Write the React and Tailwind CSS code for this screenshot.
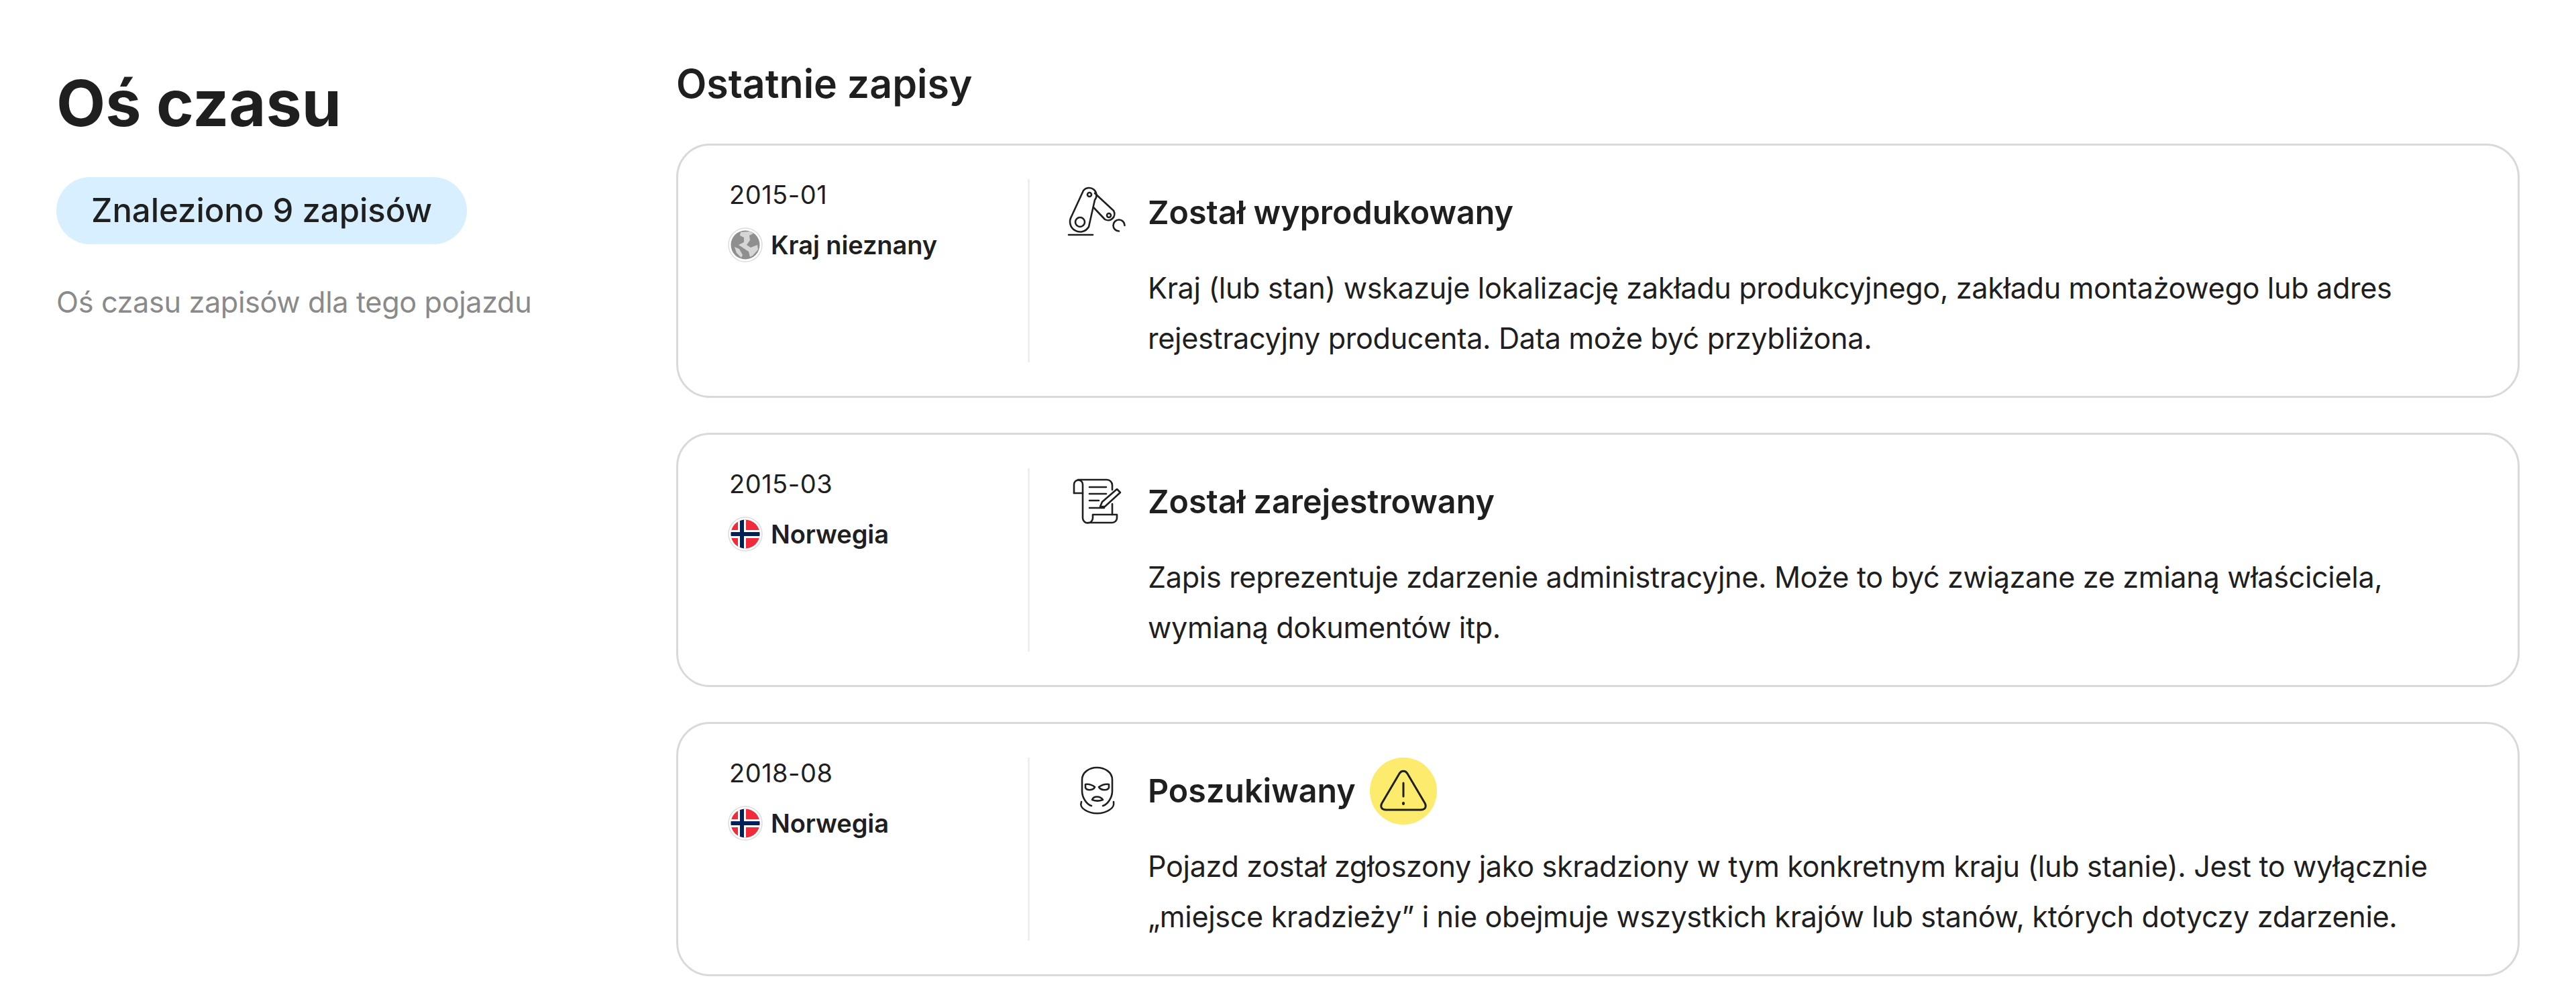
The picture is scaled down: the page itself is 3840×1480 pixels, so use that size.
import React from "react";

const font = { fontFamily: "Inter, sans-serif" };

const records = [
  {
    date: "2015-01",
    country: "Kraj nieznany",
    flag: "globe",
    icon: "factory",
    title: "Został wyprodukowany",
    lines: [
      "Kraj (lub stan) wskazuje lokalizację zakładu produkcyjnego, zakładu montażowego lub adres",
      "rejestracyjny producenta. Data może być przybliżona.",
    ],
  },
  {
    date: "2015-03",
    country: "Norwegia",
    flag: "no",
    icon: "scroll",
    title: "Został zarejestrowany",
    lines: [
      "Zapis reprezentuje zdarzenie administracyjne. Może to być związane ze zmianą właściciela,",
      "wymianą dokumentów itp.",
    ],
  },
  {
    date: "2018-08",
    country: "Norwegia",
    flag: "no",
    icon: "mask",
    title: "Poszukiwany",
    warning: true,
    lines: [
      "Pojazd został zgłoszony jako skradziony w tym konkretnym kraju (lub stanie). Jest to wyłącznie",
      "„miejsce kradzieży” i nie obejmuje wszystkich krajów lub stanów, których dotyczy zdarzenie.",
    ],
  },
];

const FactoryIcon = () => (
  <svg width="120" height="100" viewBox="0 0 120 100" fill="none" stroke="#1f1f1f" strokeWidth="2.6" strokeLinecap="round" strokeLinejoin="round">
    <path d="M45 17 L27 56 A15 15 0 0 0 53 71 L62 31 A9.5 9.5 0 0 0 45 17Z" />
    <circle cx="40" cy="64" r="7" />
    <circle cx="54" cy="23" r="3" />
    <path d="M62 21 L90 47 A9.5 9.5 0 0 1 77 60 L60 42" />
    <circle cx="83" cy="54" r="3" />
    <path d="M106.5 69 A8.5 8.5 0 1 0 98 77.5" />
    <path d="M23 83 H59" />
  </svg>
);

const ScrollIcon = () => (
  <svg width="120" height="100" viewBox="0 0 120 100" fill="none" stroke="#1f1f1f" strokeWidth="2.6" strokeLinecap="round" strokeLinejoin="round">
    <path d="M37 17 H80 A8 8 0 0 1 88 25 V32" />
    <path d="M31 37 V24 A6.5 6.5 0 0 1 44 24 V74 A7.5 7.5 0 0 0 59 74 V69 H95 V74 A7 7 0 0 1 88 81 H52" />
    <path d="M31 37 H44" />
    <path d="M54 28 H79 M54 38 H79 M54 48 H68 M54 59 H76" />
    <path d="M70 57 L73 50 L95 31 L100 36 L77 57 Z" />
    <path d="M88 53 V69" />
  </svg>
);

const MaskIcon = () => (
  <svg width="120" height="100" viewBox="0 0 120 100" fill="none" stroke="#1f1f1f" strokeWidth="2.6" strokeLinecap="round" strokeLinejoin="round">
    <path d="M57 72 C50 70 43 60 43 50 V33 C43 22 54 15 65 15 C77 15 88 22 88 33 V50 C88 60 81 70 74 72" />
    <path d="M42 66 C40 72 42 75 47 78 C57 85 74 85 84 78 C89 75 91 72 90 66" />
    <path d="M48 40 C54 39 60 42 62 44 C60 49 50 50 48 45 Z" />
    <path d="M83 40 C77 39 71 42 68 44 C71 49 81 50 83 45 Z" />
    <path d="M58 63 C60 57 70 57 74 63 C69 65 63 65 58 63 Z" />
  </svg>
);

const icons = { factory: FactoryIcon, scroll: ScrollIcon, mask: MaskIcon };

const GlobeFlag = () => (
  <svg width="52" height="52" viewBox="0 0 52 52">
    <circle cx="26" cy="26" r="25" fill="#fff" stroke="#dcdcdc" strokeWidth="1.5" />
    <circle cx="26" cy="26" r="21.5" fill="#8f8f8f" />
    <path d="M19 7 L33 6 L38 9 L32 12 L33 19 L28 26 L34 30 L44 26 L45 33 L37 42 L33 44 L31 36 L22 30 L16 26 L24 22 L24 15 L18 12Z" fill="#d6d6d6" />
    <path d="M10 29 L17 32 L22 41 L20 45 L13 38Z" fill="#d6d6d6" />
  </svg>
);

const NorwayFlag = () => (
  <svg width="52" height="52" viewBox="0 0 52 52">
    <defs>
      <clipPath id="no-flag">
        <circle cx="26" cy="26" r="21.5" />
      </clipPath>
    </defs>
    <circle cx="26" cy="26" r="25" fill="#fff" stroke="#dcdcdc" strokeWidth="1.5" />
    <g clipPath="url(#no-flag)">
      <rect x="0" y="0" width="52" height="52" fill="#ef2b3c" />
      <rect x="0" y="20" width="52" height="12" fill="#fff" />
      <rect x="15" y="0" width="12" height="52" fill="#fff" />
      <rect x="0" y="23" width="52" height="6" fill="#00205b" />
      <rect x="18" y="0" width="6" height="52" fill="#00205b" />
    </g>
  </svg>
);

const WarningBadge = () => (
  <div className="w-[100px] h-[100px] rounded-full bg-[#fdeb6d] flex items-center justify-center ml-[21px]">
    <svg width="72" height="64" viewBox="0 0 72 64" fill="none" stroke="#1f1f1f" strokeWidth="3" strokeLinecap="round" strokeLinejoin="round">
      <path d="M30 6 L4 50 C1 56 4 60 10 60 H62 C68 60 71 56 68 50 L42 6 C39 1 33 1 30 6Z" />
      <path d="M36 20 V40" />
      <path d="M36 50 V51" strokeWidth="4" />
    </svg>
  </div>
);

const RecordCard = ({ record }) => {
  const Icon = icons[record.icon];
  return (
    <div className="flex border-[3px] border-[#d9d9d9] rounded-[50px] pt-[50px] pb-[50px] pl-[76px] h-[379px]">
      <div className="w-[445px] shrink-0">
        <div className="text-[38px] leading-[46px] text-[#1f1f1f] tracking-[0.5px]">{record.date}</div>
        <div className="flex items-center gap-[12px] mt-[26px] -ml-[2px]">
          {record.flag === "globe" ? <GlobeFlag /> : <NorwayFlag />}
          <span className="text-[38px] leading-[46px] font-semibold text-[#1f1f1f] tracking-[-0.1px]">{record.country}</span>
        </div>
      </div>
      <div className="flex-1 border-l-[3px] border-[#eeeeee] pl-[35px]">
        <div className="flex items-center h-[100px]">
          <div className="w-[141px] h-[100px] shrink-0">
            <Icon />
          </div>
          <h3 className="text-[48.4px] font-semibold text-[#1f1f1f]">{record.title}</h3>
          {record.warning && <WarningBadge />}
        </div>
        <div className="mt-[25px] ml-[141px] text-[43.2px] leading-[75px] text-[#1f1f1f] whitespace-nowrap tracking-[-0.35px]">
          {record.lines.map((line) => (
            <div key={line}>{line}</div>
          ))}
        </div>
      </div>
    </div>
  );
};

export default function App() {
  return (
    <div style={font} className="flex w-[3840px] h-[1480px] bg-white px-[84px] overflow-hidden">
      <aside className="w-[924px] shrink-0 pt-[94px]">
        <h1 className="text-[95px] leading-[120px] font-bold text-[#1f1f1f]">Oś czasu</h1>
        <div className="inline-block mt-[50px] h-[100px] px-[52px] rounded-full bg-[#d7efff] text-[49px] leading-[100px] font-[550] text-[#1f1f1f]">
          Znaleziono 9 zapisów
        </div>
        <p className="mt-[54px] text-[43.2px] text-[#8a8a8a] tracking-[-0.35px]">Oś czasu zapisów dla tego pojazdu</p>
      </aside>
      <main className="flex-1 pt-[88px]">
        <h2 className="text-[59px] leading-[74px] font-semibold text-[#1f1f1f]">Ostatnie zapisy</h2>
        <div className="flex flex-col gap-[52px] mt-[52px]">
          {records.map((r) => (
            <RecordCard key={r.date} record={r} />
          ))}
        </div>
      </main>
    </div>
  );
}
